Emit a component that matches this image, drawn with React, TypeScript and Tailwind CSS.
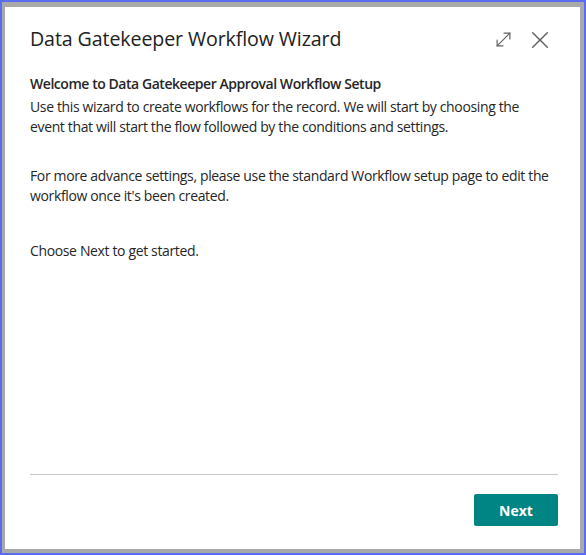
import React from 'react'

function ExpandIcon() {
  return (
    <svg width="17" height="17" viewBox="0 0 16 16" fill="none" stroke="#616161" strokeWidth="1.1" strokeLinecap="round">
      <path d="M2 14 L14 2" />
      <path d="M8.5 2 H14 V7.5" />
      <path d="M2 8.5 V14 H7.5" />
    </svg>
  )
}

function CloseIcon() {
  return (
    <svg width="18" height="18" viewBox="0 0 16 16" fill="none" stroke="#616161" strokeWidth="1.3" strokeLinecap="round">
      <path d="M1.5 1.5 L14.5 14.5" />
      <path d="M14.5 1.5 L1.5 14.5" />
    </svg>
  )
}

export default function App() {
  return (
    <div
      className="w-[586px] h-[555px] border-2 border-[#5a6cf0] bg-[#a9a9a9] pl-[3px] pt-[5px] pr-[4px] pb-[4px] flex"
      style={{ fontFamily: '"Open Sans", "Noto Sans", Arial, sans-serif' }}
    >
      <div className="flex-1 bg-white flex flex-col pl-[25px] pr-[22px] pt-[18px] pb-[23px] text-[#262626]">
        <div className="flex items-center h-[28px]">
          <h1 className="flex-1 text-[19.6px] leading-[28px] tracking-[-0.1px] text-[#212121]">
            Data Gatekeeper Workflow Wizard
          </h1>
          <button className="mr-[19px] mt-[1px]">
            <ExpandIcon />
          </button>
          <button className="mr-[9px] mt-[1px]">
            <CloseIcon />
          </button>
        </div>

        <div className="mt-[21px] pr-[6px] text-[14px] leading-[20px] tracking-[-0.36px]">
          <h2 className="font-semibold tracking-[-0.45px]">Welcome to Data Gatekeeper Approval Workflow Setup</h2>
          <p className="mt-[3px]">
            Use this wizard to create workflows for the record. We will start by choosing the event that will start the
            flow followed by the conditions and settings.
          </p>
          <p className="mt-[29px]">
            For more advance settings, please use the standard Workflow setup page to edit the workflow once it's been
            created.
          </p>
          <p className="mt-[35px]">Choose Next to get started.</p>
        </div>

        <div className="flex-1" />

        <div className="h-px bg-[#c8c8c8]" />
        <div className="flex justify-end mt-[19px]">
          <button className="w-[84px] h-[32px] rounded-[2px] bg-[#008584] text-white text-[14px] font-bold">
            Next
          </button>
        </div>
      </div>
    </div>
  )
}
